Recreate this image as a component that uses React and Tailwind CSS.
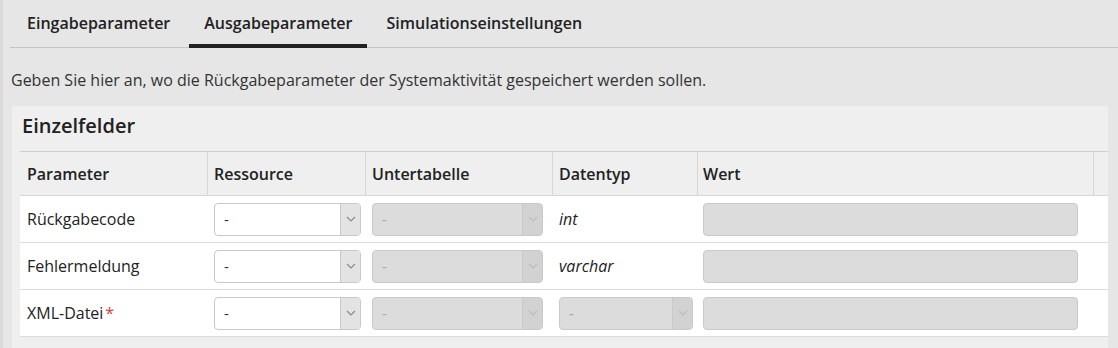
import React from "react";

const F = { fontFamily: '"Open Sans", "Noto Sans", sans-serif' };

function Chevron({ color = "#8a8a8a" }) {
  return (
    <svg width="10" height="6" viewBox="0 0 10 6" fill="none">
      <path d="M1 1l4 4 4-4" stroke={color} strokeWidth="1.2" />
    </svg>
  );
}

function Select({ w, disabled }) {
  return (
    <div
      className={`flex h-[33px] rounded-[4px] border border-[#c9c9c9] overflow-hidden ${
        disabled ? "bg-[#dcdcdc]" : "bg-white"
      }`}
      style={{ width: w }}
    >
      <div
        className={`flex-1 flex items-center pl-[9px] text-[15px] ${
          disabled ? "text-[#a8a8a8]" : "text-[#333]"
        }`}
      >
        -
      </div>
      <div
        className={`w-[20px] flex items-center justify-center border-l border-[#c9c9c9] ${
          disabled ? "bg-[#d2d2d2]" : "bg-[#e3e3e3]"
        }`}
      >
        <Chevron color={disabled ? "#bdbdbd" : "#8a8a8a"} />
      </div>
    </div>
  );
}

function Input() {
  return <div className="w-[375px] h-[33px] rounded-[4px] border border-[#c9c9c9] bg-[#dcdcdc]" />;
}

const rows = [
  { name: "Rückgabecode", type: "int" },
  { name: "Fehlermeldung", type: "varchar" },
  { name: "XML-Datei", required: true },
];

export default function App() {
  return (
    <div className="w-[1118px] h-[348px] overflow-hidden bg-[#e6e6e6] border-l-[3px] border-[#dadada] text-[#222]" style={F}>
      <div className="ml-[7px] pl-[2px] flex gap-[4px] border-b border-[#c4c4c4]">
        {["Eingabeparameter", "Ausgabeparameter", "Simulationseinstellungen"].map((t, i) => (
          <div
            key={t}
            className={`h-[48px] px-[15px] pt-[12px] border-b-4 text-[16px] leading-[22px] font-semibold text-[#222] ${
              i === 1 ? "border-[#222]" : "border-transparent"
            }`}
            style={{ marginBottom: -1 }}
          >
            {t}
          </div>
        ))}
      </div>
      <div className="ml-[8px] mt-[21px] text-[16px] leading-[22px] text-[#333]">
        Geben Sie hier an, wo die Rückgabeparameter der Systemaktivität gespeichert werden sollen.
      </div>
      <div className="ml-[9px] mt-[15px] w-[1096px] h-[300px] bg-[#efefef] pl-[8px]">
        <div className="pt-[6px] pl-[2px] text-[20px] leading-[28px] font-semibold text-[#222]">Einzelfelder</div>
        <div className="mt-[11px] w-[1088px] border-t border-[#cfcfcf]">
          <div className="flex h-[44px] text-[16px] font-semibold text-[#222] border-b border-[#d6d6d6]">
            <div className="w-[188px] pl-[7px] flex items-center border-r border-[#d6d6d6]">Parameter</div>
            <div className="w-[158px] pl-[6px] flex items-center border-r border-[#d6d6d6]">Ressource</div>
            <div className="w-[187px] pl-[6px] flex items-center border-r border-[#d6d6d6]">Untertabelle</div>
            <div className="w-[145px] pl-[6px] flex items-center border-r border-[#d6d6d6]">Datentyp</div>
            <div className="w-[396px] pl-[5px] flex items-center border-r border-[#d6d6d6]">Wert</div>
            <div className="flex-1" />
          </div>
          {rows.map((r) => (
            <div key={r.name} className="flex h-[47px] bg-white border-b border-[#dcdcdc] text-[16px] text-[#222] items-center">
              <div className="w-[188px] pl-[7px] flex items-center">
                {r.name}
                {r.required && <span className="text-[#e03a3a] ml-[2px]">*</span>}
              </div>
              <div className="w-[158px] pl-[6px]">
                <Select w={147} />
              </div>
              <div className="w-[187px] pl-[6px]">
                <Select w={171} disabled />
              </div>
              <div className="w-[145px] pl-[6px] italic">
                {r.type ? r.type : <Select w={134} disabled />}
              </div>
              <div className="w-[396px] pl-[5px]">
                <Input />
              </div>
              <div className="flex-1" />
            </div>
          ))}
        </div>
      </div>
    </div>
  );
}
